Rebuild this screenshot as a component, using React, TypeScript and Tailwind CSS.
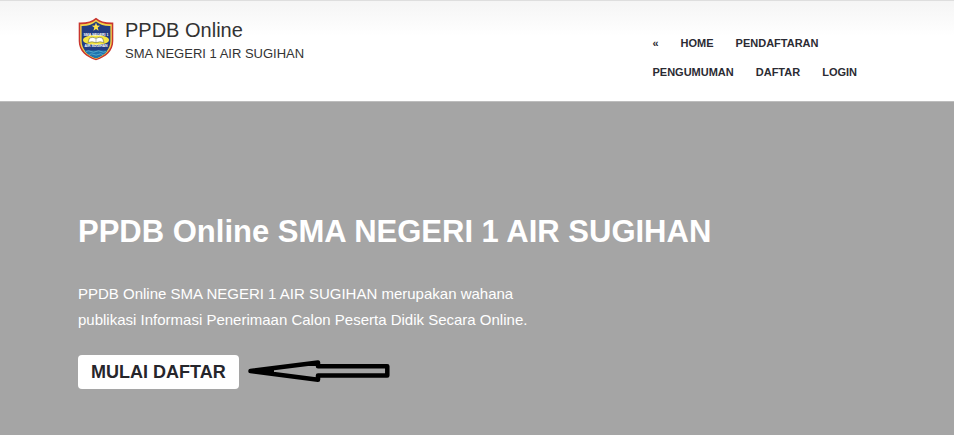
const firstRow = ['«', 'HOME', 'PENDAFTARAN'];
const secondRow = ['PENGUMUMAN', 'DAFTAR', 'LOGIN'];

function Crest() {
  return (
    <svg className="h-11 w-9 shrink-0" viewBox="0 0 36 44" role="img" aria-label="Logo SMA Negeri 1 Air Sugihan">
      <path d="M18 .7Q12 6 .7 5.5V24C.7 34 8 40 18 43.3C28 40 35.3 34 35.3 24V5.5Q24 6 18 .7Z" fill="#c9362e" />
      <path d="M18 2.8Q12 7.6 2.2 7.2V24C2.2 33 9 38.8 18 42C27 38.800 33.800 33 33.800 24V7.200Q24 7.600 18 2.800Z" fill="#f3d34a" />
      <path d="M18 4.500Q12 9.300 3.600 9V24C3.600 32.200 9.600 38 18 41.200C26.400 38 32.400 32.200 32.400 24V9Q24 9.300 18 4.500Z" fill="#223c82" />
      <path d="M6.500 33.500H29.500C27 37.500 22.500 39.700 18 41.200C13.500 39.700 9 37.500 6.500 33.500Z" fill="#1e74ae" />
      <path d="M8 34.500q2.500-1.500 5 0t5 0t5 0t5 0M11.500 37.500q2.200-1.300 4.400 0t4.400 0t4.400 0" fill="none" stroke="#65b5d4" strokeWidth=".8" />
      <path d="m18 5.600 1.100 3 3.100.1-2.500 1.900.9 3.100-2.600-1.800-2.600 1.800.9-3.100-2.500-1.900 3.100-.1Z" fill="#ffe24b" />
      <ellipse cx="18" cy="23" rx="13" ry="5" fill="#f6e640" />
      <path d="M11.500 21q3.500-1.500 6.500.3q3-1.800 6.500-.3l1.500 4.500q-4-1.500-8 .2q-4-1.700-8-.2Z" fill="#fff" stroke="#68683d" strokeWidth=".6" />
      <path d="M18 21.300v4.500" stroke="#77765b" strokeWidth=".5" />
      <text x="18" y="19" textAnchor="middle" fontFamily="Liberation Sans, sans-serif" fontSize="3.500" fontWeight="bold" fill="#fff">SMA NEGERI 1</text>
      <text x="18" y="30" textAnchor="middle" fontFamily="Liberation Sans, sans-serif" fontSize="3.500" fontWeight="bold" fill="#fff">AIR SUGIHAN</text>
    </svg>
  );
}

function NavRow({ items }: { items: string[] }) {
  return (
    <ul className="flex gap-[22px]">
      {items.map((item) => (
        <li key={item}>
          <a href="#" className="block">{item}</a>
        </li>
      ))}
    </ul>
  );
}

export default function App() {
  return (
    <div className="flex min-h-screen flex-col bg-[#a5a5a5] font-['Liberation_Sans',Arial,sans-serif]">
      <header className="flex items-start justify-between border-t border-b border-t-[#dedede] border-b-[#bdbdbd] bg-white bg-linear-to-b from-[#f5f5f5] to-white to-35% px-[78px] pt-4 pb-[14px]">
        <a href="#" className="flex items-start gap-[11px] text-[#333333]">
          <Crest />
          <span className="flex flex-col">
            <span className="text-[20px] leading-[27px]">PPDB Online</span>
            <span className="text-[13px] leading-5">SMA NEGERI 1 AIR SUGIHAN</span>
          </span>
        </a>
        <nav className="mr-[19px] pt-3 text-[11px] leading-[29px] font-bold text-[#2b2b33]">
          <NavRow items={firstRow} />
          <NavRow items={secondRow} />
        </nav>
      </header>
      <main className="flex flex-1 flex-col items-start px-[78px] pt-28 pb-11 text-white">
        <h1 className="text-[31px] leading-9 font-bold">PPDB Online SMA NEGERI 1 AIR SUGIHAN</h1>
        <p className="mt-[31px] max-w-[460px] text-[15px] leading-[26px]">
          PPDB Online SMA NEGERI 1 AIR SUGIHAN merupakan wahana publikasi Informasi Penerimaan Calon Peserta Didik Secara Online.
        </p>
        <div className="mt-[22px] flex items-center gap-2">
          <button type="button" className="rounded-sm bg-white px-[13px] py-[5px] text-[18px] leading-6 font-bold text-[#26262b]">
            MULAI DAFTAR
          </button>
          <svg className="h-6 w-36" viewBox="0 0 144 24" aria-hidden="true">
            <path d="M3.500 11L71 2.500V6.300H140.300V15.600H71V19.700Z" fill="none" stroke="#000" strokeWidth="4.500" strokeLinejoin="round" />
            <path d="M3 9.500L27 7.500V14.500L3 12.500Z" fill="#000" />
          </svg>
        </div>
      </main>
    </div>
  );
}
